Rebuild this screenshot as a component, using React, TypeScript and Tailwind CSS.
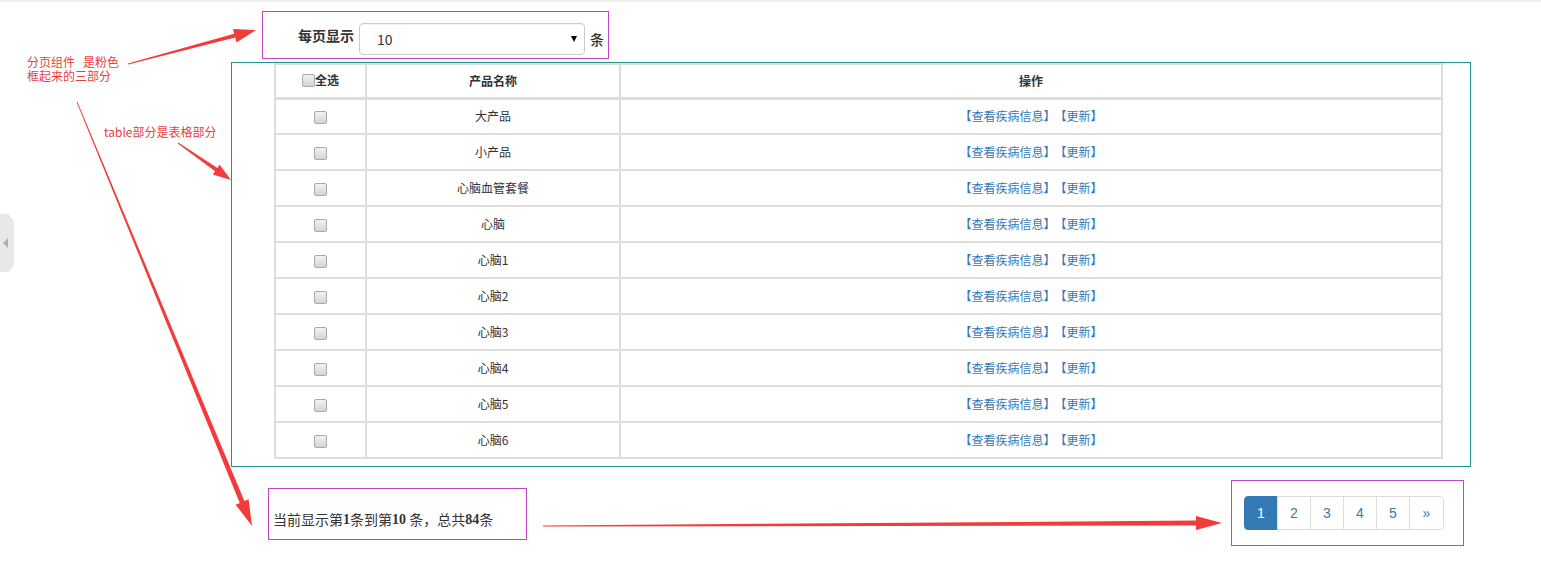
import React from "react";

const rows = ["大产品", "小产品", "心脑血管套餐", "心脑", "心脑1", "心脑2", "心脑3", "心脑4", "心脑5", "心脑6"];

// tapered arrow shape, thin at the tail and widening up to the head
function arrowPoints(x0: number, y0: number, x1: number, y1: number, w0: number, w1: number, hl: number, hw: number) {
  const len = Math.hypot(x1 - x0, y1 - y0);
  const dx = (x1 - x0) / len;
  const dy = (y1 - y0) / len;
  const nx = -dy;
  const ny = dx;
  const bx = x1 - dx * hl;
  const by = y1 - dy * hl;
  const pts = [
    [x0 + (nx * w0) / 2, y0 + (ny * w0) / 2],
    [bx + (nx * w1) / 2, by + (ny * w1) / 2],
    [bx + (nx * hw) / 2, by + (ny * hw) / 2],
    [x1, y1],
    [bx - (nx * hw) / 2, by - (ny * hw) / 2],
    [bx - (nx * w1) / 2, by - (ny * w1) / 2],
    [x0 - (nx * w0) / 2, y0 - (ny * w0) / 2],
  ];
  return pts.map((p) => p.join(",")).join(" ");
}

function Annotations() {
  return (
    <>
      <svg className="absolute left-0 top-0 pointer-events-none" width="1541" height="565">
        <polygon fill="#f23b3b" points={arrowPoints(128, 62, 256, 28, 1, 4, 22, 14)} />
        <polygon fill="#f23b3b" points={arrowPoints(178, 141, 231, 178, 1, 4, 18, 12)} />
        <polygon fill="#f23b3b" points={arrowPoints(77, 100, 252, 524, 0.8, 5, 26, 14)} />
        <polygon fill="#f23b3b" points={arrowPoints(543, 524, 1222, 521, 1, 5, 26, 14)} />
      </svg>
      <div className="absolute left-[27px] top-[53px] text-[12px] leading-[14px] text-[#e8403f]">
        分页组件&nbsp;&nbsp;&nbsp;是粉色
        <br />
        框起来的三部分
      </div>
      <div className="absolute left-[104px] top-[122px] text-[12px] leading-[16px] text-[#e8403f]">table部分是表格部分</div>
    </>
  );
}

function Check() {
  return (
    <input
      type="checkbox"
      className="appearance-none w-[13px] h-[13px] m-0 align-middle border border-[#a9a9a9] rounded-[2px] bg-gradient-to-b from-[#f2f2f2] to-[#d4d4d4]"
    />
  );
}

export default function App() {
  return (
    <div className="relative w-[1541px] h-[565px] bg-white border-t-2 border-[#eeeeee] text-[#333] font-['Noto_Sans_CJK_SC','Noto_Sans',sans-serif] overflow-hidden">
      {/* sidebar toggle on the left edge */}
      <div className="absolute left-0 top-[212px] w-[14px] h-[58px] bg-[#e8e8e8] flex items-center justify-center [clip-path:polygon(0_0,60%_0,100%_12%,100%_88%,60%_100%,0_100%)]">
        <div className="w-0 h-0 border-y-[5px] border-y-transparent border-r-[5px] border-r-[#b0b0b0] -ml-[3px]" />
      </div>

      <div className="ml-[231px] w-[1240px] flex flex-col">
        {/* page size */}
        <div className="ml-[31px] mt-[9px] w-[347px] h-[48px] border border-[#c245c6] flex items-center pl-[35px]">
          <span className="text-[14px] font-bold mr-[5px]">每页显示</span>
          <div className="w-[226px] h-[32px] mt-[8px] border border-[#cccccc] rounded-[4px] flex items-center justify-between pl-[17px] pr-[7px] text-[14px] shadow-[inset_0_1px_1px_rgba(0,0,0,0.05)]">
            <span>10</span>
            <span className="w-0 h-0 border-x-[3.5px] border-x-transparent border-t-[6px] border-t-black" />
          </div>
          <span className="ml-[5px] mt-[8px] text-[14px] font-medium">条</span>
        </div>

        {/* table */}
        <div className="mt-[3px] border border-[#21908f] pl-[42px] pr-[26px] pb-[7px]">
          <table className="w-[1169px] border-collapse text-[12px] table-fixed">
            <colgroup>
              <col className="w-[91px]" />
              <col className="w-[254px]" />
              <col />
            </colgroup>
            <thead>
              <tr className="h-[34px]">
                <th className="border-2 border-b-[3px] border-[#dddddd] font-bold">
                  <span className="inline-flex items-center">
                    <Check />
                    全选
                  </span>
                </th>
                <th className="border-2 border-b-[3px] border-[#dddddd] font-bold">产品名称</th>
                <th className="border-2 border-b-[3px] border-[#dddddd] font-bold">操作</th>
              </tr>
            </thead>
            <tbody>
              {rows.map((name) => (
                <tr key={name} className="h-[36px]">
                  <td className="border-2 border-[#dddddd] text-center">
                    <Check />
                  </td>
                  <td className="border-2 border-[#dddddd] text-center">{name}</td>
                  <td className="border-2 border-[#dddddd] text-center text-[#337ab7]">
                    【查看疾病信息】<span className="ml-[5px]">【更新】</span>
                  </td>
                </tr>
              ))}
            </tbody>
          </table>
        </div>

        {/* info + pagination */}
        <div className="flex items-start">
          <div className="ml-[37px] mt-[21px] w-[259px] h-[52px] border border-[#c245c6] flex items-end pl-[4px] pb-[9px] text-[14px] whitespace-nowrap">
            当前显示第<b className="font-['Liberation_Serif',serif]">1</b>条到第<b className="font-['Liberation_Serif',serif]">10</b>&nbsp;条，总共<b className="font-['Liberation_Serif',serif]">84</b>条
          </div>
          <div className="ml-auto mr-[7px] mt-[13px] w-[233px] h-[66px] border border-[#c245c6] flex items-center pl-[12px]">
            <div className="flex text-[14px] font-['Liberation_Sans',sans-serif]">
              <span className="w-[34px] h-[34px] flex items-center justify-center bg-[#337ab7] border border-[#337ab7] text-white rounded-l-[4px]">1</span>
              {["2", "3", "4", "5"].map((n) => (
                <span key={n} className="w-[34px] h-[34px] -ml-px flex items-center justify-center border border-[#dddddd] text-[#337ab7]">{n}</span>
              ))}
              <span className="w-[35px] h-[34px] -ml-px flex items-center justify-center border border-[#dddddd] text-[#337ab7] rounded-r-[4px]">»</span>
            </div>
          </div>
        </div>
      </div>

      <Annotations />
    </div>
  );
}
